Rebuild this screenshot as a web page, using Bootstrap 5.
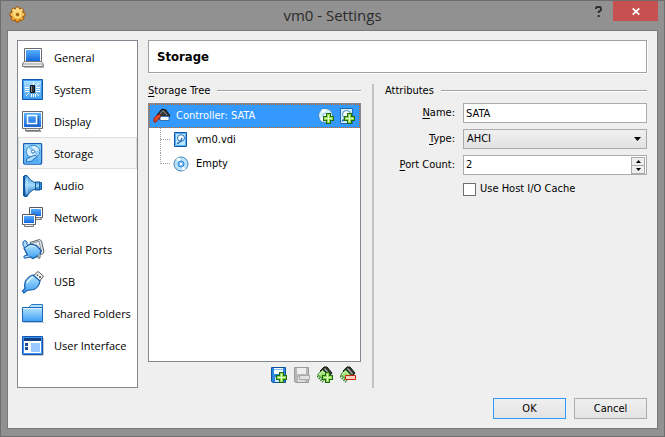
<!DOCTYPE html>
<html lang="en">
<head>
<meta charset="utf-8">
<meta name="viewport" content="width=device-width, initial-scale=1">
<title>vm0 - Settings</title>
<link rel="stylesheet" href="https://cdn.jsdelivr.net/npm/bootstrap@5.3.0/dist/css/bootstrap.min.css">
<style>
  :root { --face: #efefef; --edge: #828790; --field-edge: #ababaf; --ui: "DejaVu Sans Condensed", "Noto Sans", sans-serif; }
  body { font-family: var(--ui); font-size: 11px; line-height: 16px; color: #000; background: #919191; }
  svg { display: block; flex: none; overflow: visible; }
  button { color: #000; }
  u { text-underline-offset: 2px; }
  .window-frame { border: 1px solid #6e6e6e; padding: 0 6px 7px; }
  .title-bar { height: 29px; }
  .title-side { width: 74px; padding: 5px 0 0 2px; }
  .title-text { font-family: "Open Sans", "Noto Sans", sans-serif; font-size: 15px; line-height: 29px; color: #2b2b2b; }
  .title-btn { border: 0; padding: 0; height: 20px; background: transparent; }
  .help-btn { width: 29px; }
  .close-btn { width: 45px; background: #c75050; }
  .client { background: var(--face); border: 1px solid #797979; padding: 9px 10px 9px 9px; }
  .page-list { width: 121px; border: 1px solid var(--edge); background: #fff; }
  .page-list .list-group-item { height: 32px; padding: 2px 0 0 3px; border: 1px solid transparent; gap: 10px; font-family: "Open Sans", "Noto Sans", sans-serif; font-size: 11px; color: #000; white-space: nowrap; background: #fff; }
  .page-list .list-group-item.active { background: #f7f7f7; border-color: #dedede; margin: 0; }
  .page-body { margin-left: 10px; }
  .page-head { height: 33px; border: 1px solid #a0a0a0; border-bottom-color: #a0a0a0; box-shadow: 1px 1px #fff; background: #fff; padding-left: 8px; font-size: 13px; font-weight: 700; margin: 0 0 6px; }
  .group-title { font-size: 11px; line-height: 16px; font-weight: 400; margin: 0; gap: 7px; white-space: nowrap; }
  .group-title::after { content: ""; flex: 1; height: 2px; background: linear-gradient(#a0a0a0 50%, #fff 50%); }
  .tree-pane { width: 213px; }
  .tree { height: 259px; border: 1px solid var(--edge); background: #fff; }
  .tree-row { height: 24px; }
  .tree-root { background: #39f; color: #fff; border: 1px dotted #c8691c; padding: 0 4px 0 3px; gap: 5px; }
  .tree-child { padding-left: 11px; gap: 7px; }
  .tree-child::before { content: ""; width: 10px; height: 12px; align-self: flex-start; border: dotted #a0a0a0; border-width: 0 0 1px 1px; margin-right: -4px; }
  .tree-child.has-next { background: repeating-linear-gradient(#a0a0a0 0 1px, transparent 1px 2px) 11px 0 / 1px 24px no-repeat; }
  .tree-child.has-next::before { border-left-color: transparent; }
  .tool-strip { gap: 7px; padding: 4px 5px 4px 0; }
  .icon-btn { border: 0; padding: 0; background: transparent; }
  .splitter { width: 2px; background: #c3c3c3; margin: 5px 11px 0 11px; }
  .fields { gap: 6px; }
  .form-label { width: 70px; flex: none; text-align: right; margin: 0; white-space: nowrap; }
  .field { height: 20px; min-height: 20px; border: 1px solid var(--field-edge); border-radius: 0; padding: 0 2px; font-size: 11px; line-height: 16px; color: #000; background-color: #fff; }
  select.field { background-image: var(--bs-form-select-bg-img), linear-gradient(#f0f0f0, #e2e2e2); --bs-form-select-bg-img: url("data:image/svg+xml,%3Csvg xmlns='http://www.w3.org/2000/svg' viewBox='0 0 7 4'%3E%3Cpath d='M0 0h7L3.500 4z'/%3E%3C/svg%3E"); background-position: right 5px center, 0 0; background-size: 7px 4px, 100% 100%; padding-left: 3px; }
  .spin-field { padding: 0 1px 0 0; }
  .spin-field input { border: 0; padding: 0 2px; flex: 1; min-width: 0; outline: 0; appearance: textfield; }
  .spin-field input::-webkit-inner-spin-button { appearance: none; }
  .spin-btn { width: 14px; height: 9px; border: 1px solid #ababab; background: #eee; padding: 0; display: grid; place-items: center; }
  .spin-btn + .spin-btn { margin-top: -1px; }
  .form-check-input.host-check { width: 13px; height: 13px; margin: 0; border: 1px solid #707070; border-radius: 0; background-color: #fff; }
  .dialog-btn { width: 73px; height: 21px; padding: 0; border: 1px solid #acacac; border-radius: 0; background: linear-gradient(#f0f0f0, #e3e3e3); font-size: 11px; line-height: 16px; color: #000; }
  .dialog-btn.default { border-color: #39f; }
</style>
<script defer src="https://cdn.jsdelivr.net/npm/bootstrap@5.3.0/dist/js/bootstrap.bundle.min.js"></script>
</head>
<body>
<svg width="0" height="0" class="position-absolute" aria-hidden="true">
  <defs>
    <linearGradient id="blue" x1="0" y1="0" x2="0" y2="1"><stop offset="0" stop-color="#58b0ff"/><stop offset="1" stop-color="#1467e0"/></linearGradient>
    <linearGradient id="sky" x1="0" y1="0" x2="0" y2="1"><stop offset="0" stop-color="#b4e4ff"/><stop offset="1" stop-color="#3d9ff4"/></linearGradient>
    <linearGradient id="horn" x1="0" y1="0" x2="0" y2="1"><stop offset="0" stop-color="#3c93dc"/><stop offset=".45" stop-color="#a4dcff"/><stop offset="1" stop-color="#1263b6"/></linearGradient>
    <linearGradient id="leaf" x1="0" y1="0" x2="1" y2="1"><stop offset="0" stop-color="#d6f8a4"/><stop offset="1" stop-color="#49bf28"/></linearGradient>
    <linearGradient id="gold" x1="0" y1="0" x2="0" y2="1"><stop offset="0" stop-color="#ffe898"/><stop offset="1" stop-color="#e99412"/></linearGradient>
    <symbol id="plus" viewBox="0 0 11 11"><path d="M3 0h5v3h3v5H8v3H3V8H0V3h3z" fill="#216c13"/><path d="M4 1h3v3h3v3H7v3H4V7H1V4h3z" fill="#8fdc50"/><path d="M5 2h1v3h3v1H6v3H5V6H2V5h3z" fill="#e4ffc4"/></symbol>
    <symbol id="disk" viewBox="0 0 20 22"><rect x=".6" y=".6" width="18" height="20.500" rx="1" fill="url(#sky)" stroke="#1560b5" stroke-width="1.300"/><path d="M2 2h15v18H2z" fill="none" stroke="#82c7fb"/><ellipse cx="10" cy="8.500" rx="6.800" ry="6.200" fill="#d7f0ff" stroke="#3384c9"/><path d="M10 8.500L5 5a6.500 6 0 0 1 4-2zM10 8.500l6-1a6 6 0 0 1-2 5z" fill="#8ccafa"/><circle cx="10" cy="8.500" r="1.600" fill="#fff" stroke="#2871b5"/><path d="M3 19l1-3.500 8-3.500 2 1.500-6 5z" fill="#a8dbff" stroke="#2670b8"/></symbol>
    <symbol id="chip" viewBox="0 0 16 18"><path d="M3 5l4-4h3l5 6-5 6z" fill="#2f3330" stroke="#171a17"/><path d="M7.500 2.500l5 5.500" stroke="#a9b3a9" stroke-width="1.200"/><path d="M.8 8.500L5.500 4l6 5.500L7 14.500z" fill="url(#leaf)" stroke="#217214"/><path d="M0 10l6 6" stroke="#2a7e1b" stroke-width="1.800" stroke-dasharray="1.500 1"/><path d="M2 8.500L5.500 5.200 9 8.500" fill="none" stroke="#eaffd0"/></symbol>
  </defs>
</svg>

<div class="window-frame min-vh-100 d-flex flex-column">
  <header class="title-bar d-flex justify-content-between">
    <div class="title-side">
      <svg width="17" height="17" viewBox="0 0 17 17"><path d="M7 1h3l.6 2 2-1 2 2-1 2.200 2.400.8v3l-2.200.6 1 2.200-2 2-2.200-1L10 16H7l-.8-2.200-2.200 1-2-2 1-2.200L1 10V7l2.200-.8-1-2.200 2-2 2.200 1z" fill="url(#gold)" stroke="#9b550b" stroke-linejoin="round"/><circle cx="8.500" cy="8.500" r="3.500" fill="#f6c24c" stroke="#fff0ae"/><circle cx="8.500" cy="8.500" r="1.500" fill="#935212"/></svg>
    </div>
    <div class="title-text flex-fill text-center">vm0 - Settings</div>
    <div class="d-flex">
      <button class="title-btn help-btn d-flex justify-content-center align-items-center" aria-label="Help"><svg width="7" height="11" viewBox="0 0 7 11"><path d="M1 3V2.200Q1 1 2.400 1h2.200Q6 1 6 2.200v1.300Q6 4.500 4.800 5L3.700 5.800V7M2.700 10h2" fill="none" stroke="#2d2d2d" stroke-width="1.900"/></svg></button>
      <button class="title-btn close-btn d-flex justify-content-center align-items-center" aria-label="Close"><svg width="8" height="7" viewBox="0 0 8 7"><path d="M.7.3l6.600 6.400M7.300.3L.7 6.700" stroke="#fff" stroke-width="1.800"/></svg></button>
    </div>
  </header>

  <main class="client flex-fill d-flex flex-column">
    <div class="d-flex">
      <nav class="page-list list-group rounded-0 flex-shrink-0" aria-label="Settings pages">
        <button class="list-group-item list-group-item-action d-flex align-items-center">
          <svg width="22" height="22" viewBox="0 0 22 22"><path d="M1 17h21v4H2z" fill="#bbb"/><path d="M2.500 1.500h17v14h-17z" fill="#fff" stroke="#646b73"/><path d="M4 3h14v11H4z" fill="url(#blue)"/><path d="M2.500 14.500h17l1.500 2v3H.5v-3z" fill="#f1f1f1" stroke="#777"/><path d="M1 17h19" stroke="#999"/></svg>General</button>
        <button class="list-group-item list-group-item-action d-flex align-items-center">
          <svg width="22" height="22" viewBox="0 0 22 22"><path d="M.5.5h20v20H.5z" fill="url(#sky)" stroke="#0f58ab"/><path d="M1.500 1.500h18v18h-18z" fill="none" stroke="#3a9af2"/><path d="M3 8.500h4M3 10.500h4M3 12.500h4M14 8.500h4M14 10.500h4M14 12.500h4M11.500 3v4M17 4l-3 3M17 17l-3-3M4 17l3-3M9.500 15v3M11.500 15v3M13.500 15v3" stroke="#fff"/><path d="M8.500 6.500h4v7h-4z" fill="#30343a" stroke="#111"/><path d="M9.500 7v6" stroke="#85909a"/></svg>System</button>
        <button class="list-group-item list-group-item-action d-flex align-items-center">
          <svg width="22" height="22" viewBox="0 0 22 22"><path d="M3 19h16v2H4z" fill="#999"/><path d="M.5.500h20v17H.5z" fill="#f3f5f7" stroke="#656b72"/><path d="M2 2h17v14H2z" fill="url(#blue)"/><path d="M5.500 4.500h9v8h-9z" fill="none" stroke="#fff" stroke-width="1.500"/><path d="M5 14.500h11M16.500 5v9" stroke="#2361ba"/><path d="M3.500 17.500h14v2h-14z" fill="#eee" stroke="#777"/></svg>Display</button>
        <button class="list-group-item list-group-item-action active d-flex align-items-center" aria-current="page">
          <svg width="22" height="22" viewBox="-1 0 22 22"><use href="#disk" width="20" height="22"/></svg>Storage</button>
        <button class="list-group-item list-group-item-action d-flex align-items-center">
          <svg width="22" height="22" viewBox="0 0 22 22"><path d="M13 7h5v8h-5z" fill="url(#horn)" stroke="#145b9f"/><path d="M17.500 7.500h2v7h-2z" fill="#3691dc" stroke="#145b9f"/><path d="M2.500.5H5Q8 6 13.500 8v6Q8 15.500 5 21.500H2.500z" fill="url(#horn)" stroke="#0e5698"/><path d="M1.500 1v20" stroke="#0e5698"/><path d="M5 3v16" stroke="#c2e9ff"/></svg>Audio</button>
        <button class="list-group-item list-group-item-action d-flex align-items-center">
          <svg width="22" height="22" viewBox="0 0 22 22"><path d="M7.500.5h13v10h-13z" fill="#fff" stroke="#555b62"/><path d="M9 2h10v7H9z" fill="url(#blue)"/><path d="M10.500 10.500h8l1 2h-10z" fill="#ddd" stroke="#777"/><path d="M.5 7.500h13v10H.5z" fill="#fff" stroke="#555b62"/><path d="M2 9h10v7H2z" fill="url(#blue)"/><path d="M2.500 17.500h9v2h-9z" fill="#eee" stroke="#777"/></svg>Network</button>
        <button class="list-group-item list-group-item-action d-flex align-items-center">
          <svg width="22" height="22" viewBox="0 0 22 22"><path d="M8 3.500L17.500.5l2 1.500 2.500 11-2 2.500-3-1z" fill="#e8e8e8" stroke="#5d6670"/><path d="M10 4.500l7-2.500 2.500 11" fill="none" stroke="#8b9298"/><path d="M2 9l6.500-4 6 1.500 4.500 5-1 4-7 4-5.500-3z" fill="url(#sky)" stroke="#155cab" stroke-width="1.300"/><path d="M2.500 8.500L1 6V3l2-1.500L5 3v3" fill="#a8ddff" stroke="#155cab"/><path d="M4 9.500L9 6.500l4 1" stroke="#dff4ff" fill="none"/><path d="M18 15v4h-2v-3" fill="#eee" stroke="#5d6670"/><path d="M6 16l-4 1v2h2l4-1" fill="#a8ddff" stroke="#155cab"/></svg>Serial Ports</button>
        <button class="list-group-item list-group-item-action d-flex align-items-center">
          <svg width="22" height="22" viewBox="0 0 22 22"><path d="M11 5l5-4.500L21.500 5 17 11z" fill="#f6f6f6" stroke="#515a63"/><path d="M15.500 3.500v1.500M18 5v2" stroke="#444" stroke-width="1.500"/><path d="M3.500 10Q7 5 11 4l7 6q-1 6-6 8.500L5 19.500 2 22 .5 20 3 17.500q-1-4 .5-7.500z" fill="url(#sky)" stroke="#155cab" stroke-width="1.200"/><path d="M5 12q3-5 6-6" stroke="#dcf4ff" stroke-width="1.500" fill="none"/></svg>USB</button>
        <button class="list-group-item list-group-item-action d-flex align-items-center">
          <svg width="22" height="22" viewBox="0 0 22 22"><path d="M7.500 6V3.500L9.500 1.500H20.500V6z" fill="#b1e0ff" stroke="#2875bd"/><path d="M.5 4.500h20v14H.5z" fill="url(#sky)" stroke="#1c68b4"/><path d="M1 5.500h19" stroke="#d9f2ff"/><path d="M1 19.500h21" stroke="#bdc8d2"/></svg>Shared Folders</button>
        <button class="list-group-item list-group-item-action d-flex align-items-center">
          <svg width="22" height="22" viewBox="0 0 22 22"><path d="M1 20.500h20.500V3" stroke="#c6c6c6" fill="none"/><path d="M.5 1.500h20v18H.5z" fill="#fff" stroke="#1256b2"/><path d="M1.500 2.500h18v16h-18z" fill="none" stroke="#3b91f4"/><path d="M2 3h17v3H2z" fill="#123e82"/><path d="M3 8h3v3H3zM3 12h3v3H3z" fill="#174a95"/><path d="M9 8h9v9H9z" fill="#9bc8ff"/></svg>User Interface</button>
      </nav>

      <div class="page-body flex-fill d-flex flex-column">
        <h1 class="page-head d-flex align-items-center">Storage</h1>
        <div class="d-flex flex-fill">
          <section class="tree-pane flex-shrink-0">
            <h2 class="group-title d-flex align-items-center pt-1 mb-1"><span><u>S</u>torage Tree</span></h2>
            <div class="tree">
              <div class="tree-row tree-root d-flex align-items-center">
                <svg width="18" height="18" viewBox="0 0 18 18"><path d="M4 8l5-6 4 1 4 6-3 3H6z" fill="#343434" stroke="#111"/><path d="M6 8l4-4.500 4 4.500" fill="none" stroke="#929292"/><path d="M7 9.500h9v4H7z" fill="#fff" stroke="#3475b1"/><path d="M1 11l5-4 2 2-5 6H1z" fill="#e64a29" stroke="#9d1c0c"/></svg>
                <span class="flex-fill">Controller: SATA</span>
                <button class="icon-btn" aria-label="Add optical drive"><svg width="16" height="16" viewBox="0 0 16 16"><circle cx="7.500" cy="7.500" r="7" fill="#d5f1fc" stroke="#3d83b8"/><path d="M7.500 7.500L3 2a7 7 0 0 1 4-1zM7.500 7.500L5 14a7 7 0 0 1-3-3z" fill="#fff"/><circle cx="7.500" cy="7.500" r="2.500" fill="#fff" stroke="#71b6db"/><use href="#plus" x="5" y="5" width="11" height="11"/></svg></button>
                <button class="icon-btn" aria-label="Add hard disk"><svg width="16" height="16" viewBox="0 0 16 16"><path d="M1.500.5h12v15h-12z" fill="#d3efff" stroke="#1f6cad"/><circle cx="7.500" cy="6.500" r="4" fill="#fff" stroke="#3f87b9"/><path d="M3 13l5-3" stroke="#286ea8" stroke-width="2"/><use href="#plus" x="5" y="5" width="11" height="11"/></svg></button>
              </div>
              <div class="tree-row tree-child has-next d-flex align-items-center">
                <svg width="16" height="16" viewBox="0 0 16 16"><path d="M1.500.5h12v14h-12z" fill="#bde6ff" stroke="#0e57a8"/><path d="M2.500 1.500h10v12h-10z" fill="none" stroke="#59b0f4"/><ellipse cx="8" cy="6" rx="3.500" ry="3.300" fill="#fff" stroke="#2472b7"/><path d="M4 12l4-3 1-3" fill="none" stroke="#2472b7" stroke-width="1.500"/></svg>
                <span>vm0.vdi</span></div>
              <div class="tree-row tree-child d-flex align-items-center">
                <svg width="16" height="16" viewBox="0 0 16 16"><circle cx="8" cy="8" r="7" fill="#b9e4ff" stroke="#4380b8"/><path d="M8 8L3 3a7 7 0 0 1 4-1.500zM8 8l5 5a7 7 0 0 1-4 1.500z" fill="#f2fcff"/><circle cx="8" cy="8" r="3" fill="#76bff8" stroke="#3585d0"/><circle cx="8" cy="8" r="1.200" fill="#fff"/></svg>
                <span>Empty</span></div>
            </div>
            <div class="d-flex justify-content-end tool-strip">
              <button class="icon-btn" aria-label="Add attachment"><svg width="16" height="18" viewBox="0 0 16 18"><path d="M.5 1.500h14v15H2l-1.500-1z" fill="#2b87de" stroke="#0c529d"/><path d="M3 2h9v6H3z" fill="#f5fbff"/><path d="M3 3.500h9" stroke="#7ac1ff"/><path d="M4 11h7v5H4z" fill="#cce7fb"/><use href="#plus" x="5" y="6" width="11" height="11"/></svg></button>
              <button class="icon-btn" aria-label="Remove attachment"><svg width="16" height="18" viewBox="0 0 16 18"><path d="M.5 1.500h14v15H2l-1.500-1z" fill="#b7b7b7" stroke="#9c9c9c"/><path d="M3 2h9v6H3z" fill="#eee"/><path d="M4 11h7v5H4z" fill="#ddd"/><path d="M5.500 9.500h10v4h-10z" fill="#e2e2e2" stroke="#aaa"/></svg></button>
              <button class="icon-btn" aria-label="Add controller"><svg width="16" height="18" viewBox="0 0 16 18"><use href="#chip" width="16" height="18"/><use href="#plus" x="5" y="6" width="11" height="11"/></svg></button>
              <button class="icon-btn" aria-label="Remove controller"><svg width="16" height="18" viewBox="0 0 16 18"><use href="#chip" width="16" height="18"/><path d="M5.500 9.500h10v4h-10z" fill="#ffd2bf" stroke="#c52a0f"/></svg></button>
            </div>
          </section>
          <div class="splitter"></div>
          <section class="flex-fill">
            <h2 class="group-title d-flex align-items-center pt-1 mb-1">Attributes</h2>
            <form class="d-grid fields">
              <div class="d-flex align-items-center gap-2"><label class="form-label" for="ctlName"><u>N</u>ame:</label><input class="form-control field" id="ctlName" type="text" value="SATA"></div>
              <div class="d-flex align-items-center gap-2"><label class="form-label" for="ctlType"><u>T</u>ype:</label><select class="form-select field" id="ctlType"><option>AHCI</option></select></div>
              <div class="d-flex align-items-center gap-2"><label class="form-label" for="ctlPorts"><u>P</u>ort Count:</label>
                <div class="field spin-field d-flex align-items-center flex-fill"><input id="ctlPorts" type="number" value="2" min="1"><div class="d-flex flex-column">
                  <button type="button" class="spin-btn" aria-label="Increase"><svg width="5" height="3" viewBox="0 0 5 3"><path d="M0 3h5L2.500 0z"/></svg></button>
                  <button type="button" class="spin-btn" aria-label="Decrease"><svg width="5" height="3" viewBox="0 0 5 3"><path d="M0 0h5L2.500 3z"/></svg></button></div></div></div>
              <div class="d-flex align-items-center gap-2"><span class="form-label"></span><div class="d-flex align-items-center"><input class="form-check-input host-check" type="checkbox" id="hostCache"><label class="ps-1" for="hostCache">Use Host I/O Cache</label></div></div>
            </form>
          </section>
        </div>
      </div>
    </div>
    <footer class="d-flex justify-content-end gap-2 mt-auto">
      <button class="btn dialog-btn default">OK</button>
      <button class="btn dialog-btn">Cancel</button>
    </footer>
  </main>
</div>
</body>
</html>
